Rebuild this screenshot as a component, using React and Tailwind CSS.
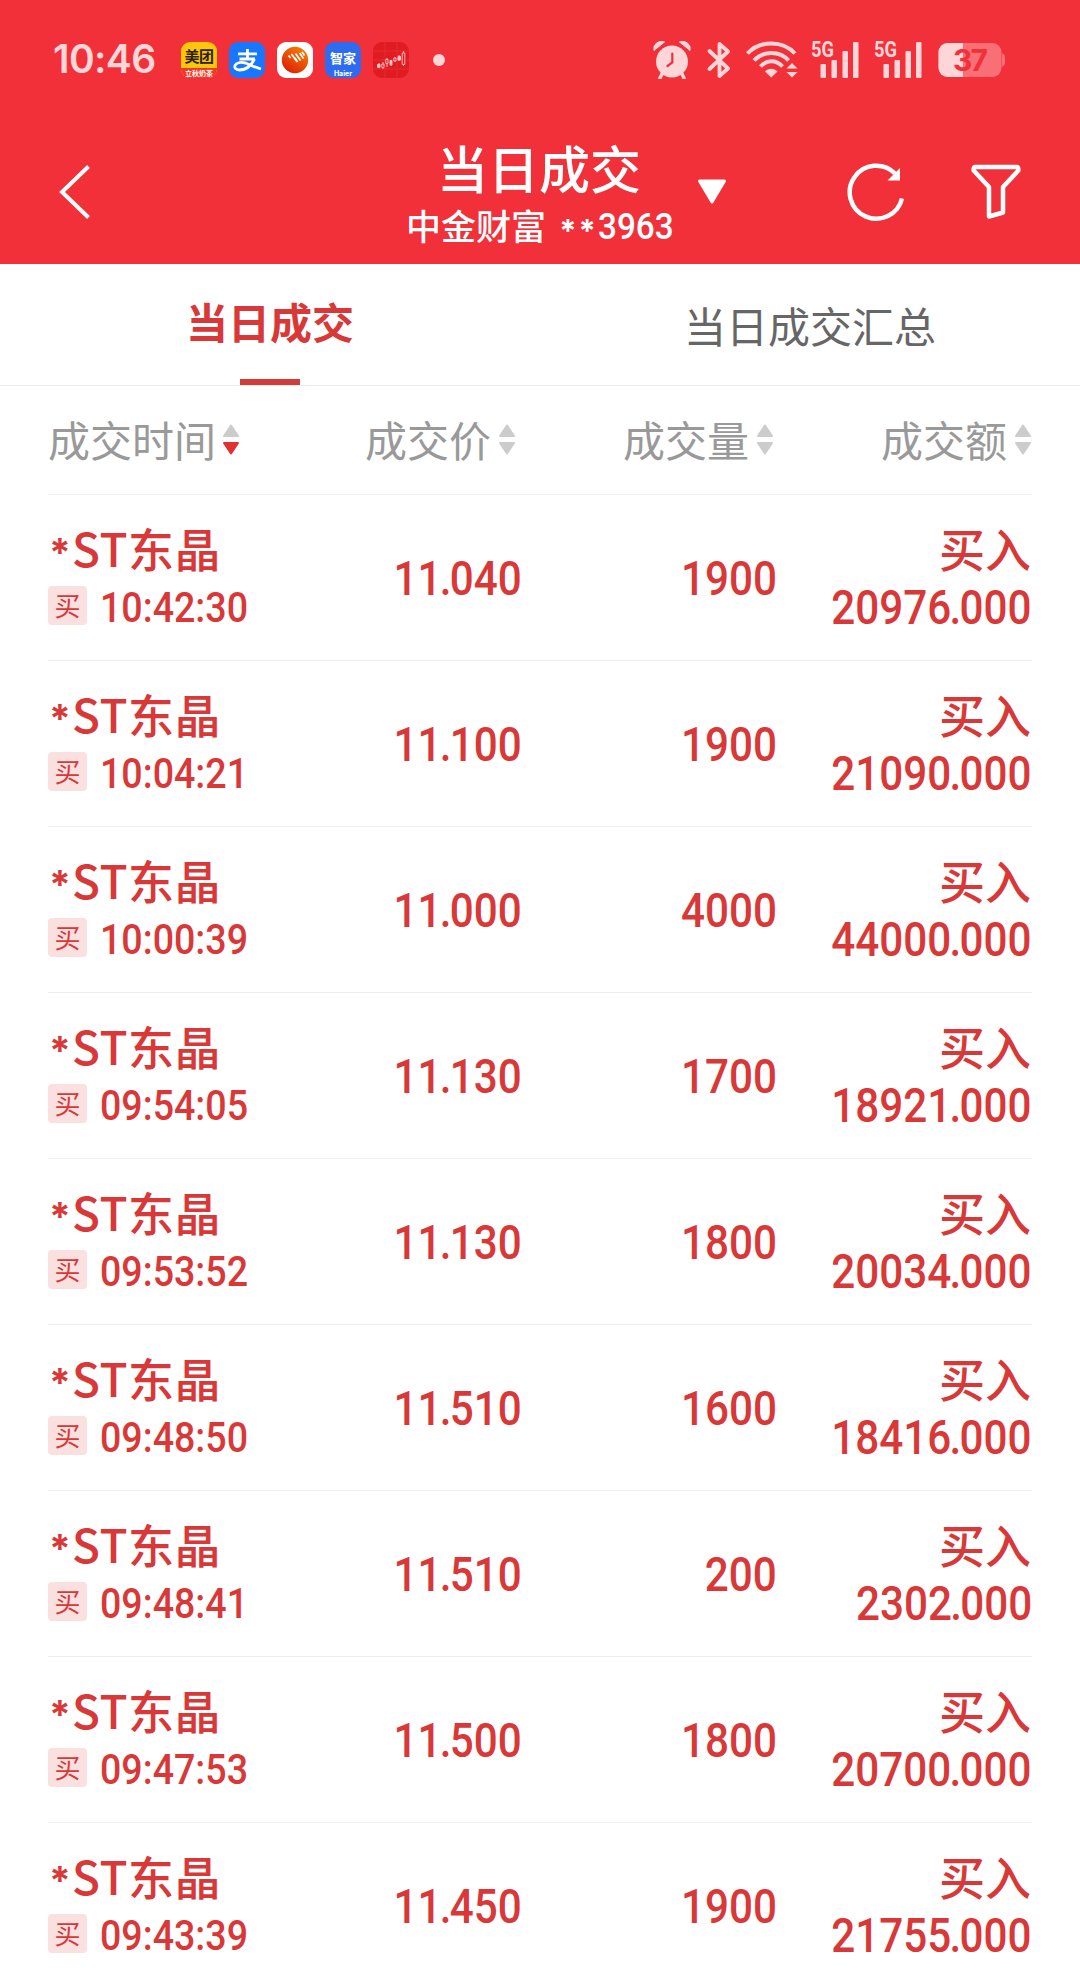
const trades = [
  { time: '10:42:30', price: '11.040', volume: '1900', amount: '20976.000' },
  { time: '10:04:21', price: '11.100', volume: '1900', amount: '21090.000' },
  { time: '10:00:39', price: '11.000', volume: '4000', amount: '44000.000' },
  { time: '09:54:05', price: '11.130', volume: '1700', amount: '18921.000' },
  { time: '09:53:52', price: '11.130', volume: '1800', amount: '20034.000' },
  { time: '09:48:50', price: '11.510', volume: '1600', amount: '18416.000' },
  { time: '09:48:41', price: '11.510', volume: '200', amount: '2302.000' },
  { time: '09:47:53', price: '11.500', volume: '1800', amount: '20700.000' },
  { time: '09:43:39', price: '11.450', volume: '1900', amount: '21755.000' },
];

const columns = [
  { label: '成交时间', sorted: true },
  { label: '成交价' },
  { label: '成交量' },
  { label: '成交额' },
];

function Signal() {
  return (
    <svg className="overflow-visible" width="48" height="38" viewBox="0 0 48 38" fill="currentColor">
      <text x="0" y="16" fontSize="22" fontWeight="700" textLength="23" lengthAdjust="spacingAndGlyphs" className="font-['Roboto',sans-serif]">5G</text>
      <rect x="9.500" y="23" width="5.500" height="14" rx="1" />
      <rect x="20.500" y="19" width="5.500" height="18" rx="1" />
      <rect x="31.500" y="10" width="5.500" height="27" rx="1" />
      <rect x="42" y="1" width="5.500" height="36" rx="1" />
    </svg>
  );
}

function AppIcons() {
  return (
    <div className="ml-[25px] flex gap-3">
      <div className="flex h-9 w-9 flex-col overflow-hidden rounded-[9px] bg-[#fdc60c] text-center">
        <div className="h-[26px] text-[15px] leading-[27px] font-bold tracking-[-0.5px] text-[#2b2200]">美团</div>
        <div className="h-[10px] bg-[#ee3a24] text-[7px] leading-[10px] font-bold whitespace-nowrap text-white">立秋奶茶</div>
      </div>
      <div className="flex h-9 w-9 items-center justify-center rounded-[9px] bg-[#1777ff]">
        <svg width="36" height="36" viewBox="0 0 36 36" fill="none" stroke="#fff">
          <path d="M9 11.800H28M18.500 7V17M10.500 17H26" strokeWidth="2.800" />
          <path d="M25.500 17C22.500 23 17 28 10.500 28C6.500 28 5 25.500 6.200 23.200C7.700 20.300 12.500 19.800 17 21.200C22 23 26 25.500 32 27" strokeWidth="2.800" />
        </svg>
      </div>
      <div className="flex h-9 w-9 items-center justify-center rounded-[9px] bg-white">
        <svg width="28" height="28" viewBox="0 0 28 28">
          <defs>
            <linearGradient id="ball" x1="1" y1="0" x2="0.300" y2="1">
              <stop offset="0" stopColor="#f88a00" />
              <stop offset="1" stopColor="#dd2208" />
            </linearGradient>
          </defs>
          <circle cx="14" cy="14" r="13.200" fill="url(#ball)" />
          <path d="M7.500 9.500L9.500 12M10.500 8L15.500 15M14.500 7.500L19.500 14.500M14 12L16.500 16M18.500 7L22.500 12.500M21 6L23.500 9.500" stroke="#fff" strokeWidth="1.700" />
        </svg>
      </div>
      <div className="flex h-9 w-9 flex-col overflow-hidden rounded-[9px] bg-[#2d6cf0] text-center text-white">
        <div className="h-[27px] text-[13px] leading-[32px] font-bold">智家</div>
        <div className="font-['Inter',sans-serif] text-[7px] leading-[10px] font-bold">Haier</div>
      </div>
      <svg width="36" height="36" viewBox="0 0 36 36">
        <rect width="36" height="36" rx="9" fill="#e01b22" />
        <path d="M0 9H36M0 18H36M0 27H36M12 0V36M24 0V36" stroke="#e93a3c" strokeWidth="0.600" />
        <g stroke="#ffc9c6" strokeWidth="0.900">
          <path d="M6 21V26M10 20V27M14 16V25M18 18V24M22 15V20M26 13V19M30.500 9V24" />
          <path d="M4.500 22.500H7V25.500H4.500ZM17 18.500H19V23H17ZM25 14.500H27.500V18H25Z" fill="#ffc9c6" />
          <path d="M8.800 22H11V25.500H8.800ZM12.800 17.500H15V21.500H12.800ZM20.800 16H23V19H20.800ZM29.200 11H31.800V22.500H29.200Z" fill="#e01b22" />
        </g>
      </svg>
    </div>
  );
}

function StatusBar() {
  return (
    <div className="flex h-[120px] items-center pl-[53px] text-[#ffd6d8]">
      <span className="w-[103px] pb-[3px] font-['Inter',sans-serif] text-[39px] leading-none font-semibold tracking-[-0.6px] whitespace-nowrap">10:46</span>
      <AppIcons />
      <span className="ml-6 h-3 w-3 rounded-full bg-[#ffd6d8]" />
      <svg className="ml-[208px]" width="38" height="38" viewBox="0 0 38 38">
        <path d="M1 9.500A7.500 7.500 0 0 1 11.500 1Z M37 9.500A7.500 7.500 0 0 0 26.500 1Z" fill="currentColor" stroke="currentColor" strokeLinejoin="round" />
        <path d="M9.500 32L7 37M28.500 32L31 37" stroke="currentColor" strokeWidth="3.500" strokeLinecap="round" />
        <circle cx="19" cy="20.500" r="16" fill="currentColor" />
        <path d="M19.300 12.500V21.500L14.500 25" fill="none" stroke="#f23039" strokeWidth="2.200" strokeLinecap="round" />
      </svg>
      <svg className="ml-4" width="24" height="38" viewBox="0 0 24 38" fill="none" stroke="currentColor" strokeWidth="3.800" strokeLinejoin="round" strokeLinecap="round">
        <path d="M2.500 10L21 27.500L12.500 35V3L21 10.500L2.500 28" />
      </svg>
      <svg className="ml-[15px]" width="52" height="38" viewBox="0 0 52 38" fill="none" stroke="currentColor" strokeWidth="4">
        <path d="M1.500 12.500C14 -1 37 -1 49 12.500M8 19.500C17 9.500 34 9.500 42.500 19.500M14.500 25.500C21 18.500 30 18.500 36.500 25.500" />
        <path d="M19 30.500C22.500 26.800 28 26.800 31.500 30.500L25.200 36.500Z" fill="currentColor" stroke="none" />
        <path d="M40.500 27.500L46 22L51.500 27.500ZM40.500 31L46 36.500L51.500 31Z" fill="currentColor" stroke="none" />
      </svg>
      <div className="ml-[13px] flex gap-[15px]">
        <Signal />
        <Signal />
      </div>
      <svg className="ml-4" width="68" height="36" viewBox="0 0 68 36">
        <defs>
          <clipPath id="level"><rect width="25" height="36" /></clipPath>
        </defs>
        <rect x="0.500" y="1" width="63" height="34" rx="9" fill="#f96f76" />
        <path d="M64 11.500C67 12 67 14 67 18C67 22 67 24 64 24.500Z" fill="#f96f76" />
        <rect x="0.500" y="1" width="63" height="34" rx="9" fill="#ffd6d8" clipPath="url(#level)" />
        <text x="15" y="29" fontSize="30" fontWeight="700" textLength="35" fill="#f23039" className="font-['Inter',sans-serif]">37</text>
      </svg>
    </div>
  );
}

function TitleBar() {
  return (
    <div className="flex h-36 text-white">
      <svg className="mt-11 ml-[58px]" width="34" height="56" viewBox="0 0 34 56" fill="none" stroke="currentColor" strokeWidth="4">
        <path d="M30.500 2.500L4 28L30.500 53.500" />
      </svg>
      <div className="ml-[277px] w-[340px] text-center font-medium">
        <div className="mt-[20px] h-[54px] text-[51px] leading-[54px]">当日成交</div>
        <div className="mt-[11px] flex h-10 items-center justify-center text-[35px] leading-10">
          中金财富
          <span className="relative top-[6px] ml-[13px] w-[39px] font-['Inter',sans-serif] text-[31px] font-bold tracking-[2px]">**</span>
          <span className="relative top-[2px] inline-block w-[74px] origin-left scale-x-90 text-left font-['Roboto',sans-serif] text-[37px]">3963</span>
        </div>
      </div>
      <svg className="mt-[59px] -ml-[12px]" width="30" height="26" viewBox="0 0 30 26">
        <path d="M2.500 2H27.500L15 23Z" fill="currentColor" stroke="currentColor" strokeWidth="3" strokeLinejoin="round" />
      </svg>
      <svg className="mt-[42px] ml-[119px]" width="60" height="60" viewBox="0 0 60 60">
        <path d="M56 36.500A26.500 26.500 0 1 1 49 11.500" fill="none" stroke="currentColor" strokeWidth="4.500" />
        <path d="M54 6V18.500H41.500Z" fill="currentColor" />
      </svg>
      <svg className="mt-[44px] ml-[65px]" width="50" height="56" viewBox="0 0 50 56" fill="none" stroke="currentColor" strokeWidth="4.500" strokeLinejoin="round">
        <path d="M4 3H46Q47.500 3 47.300 6.500L32 23V48.500L18 52.500V23L2.700 6.500Q2.500 3 4 3Z" />
      </svg>
    </div>
  );
}

function SortArrows({ sorted }) {
  return (
    <svg className={sorted ? 'ml-[6px]' : 'ml-[7px]'} width="18" height="34" viewBox="0 0 18 34" strokeLinejoin="round" strokeWidth="2">
      <path d="M2 13L9 2.500L16 13Z" fill="#ccc" stroke="#ccc" />
      <path d="M2 20L9 30.500L16 20Z" fill={sorted ? '#e03133' : '#ccc'} stroke={sorted ? '#e03133' : '#ccc'} />
    </svg>
  );
}

// condensed figures, with a tighter decimal point
function Figure({ value }) {
  const [whole, decimals] = value.split('.');
  return (
    <span className="inline-block origin-right scale-x-[0.88] font-['Roboto',sans-serif] text-[48px] leading-none font-medium">
      {whole}
      {decimals && <span className="-mx-[2px]">.</span>}
      {decimals}
    </span>
  );
}

function TradeRow({ trade }) {
  return (
    <div className="grid h-[166px] grid-cols-[210px_258px_258px_258px] border-t border-[#eee] text-[#d83838]">
      <div className="pt-[25px]">
        <div className="flex h-[54px] items-center text-[46px] leading-[54px] font-medium whitespace-nowrap">
          <span className="relative top-[6px] w-[24px] text-center font-['Inter',sans-serif] text-[39px] font-bold">*</span>
          <span className="tracking-[0.5px]">ST东晶</span>
        </div>
        <div className="mt-3 flex h-[39px] items-center">
          <span className="h-[39px] w-[39px] shrink-0 rounded-[4px] bg-[#fbe0e0] text-center text-[26px] leading-[37px]">买</span>
          <span className="mt-[5px] ml-[13px] inline-block origin-left scale-x-[0.895] font-['Roboto',sans-serif] text-[42px] leading-none font-medium">{trade.time}</span>
        </div>
      </div>
      <div className="-mr-[6px] pt-[60px] text-right">
        <Figure value={trade.price} />
      </div>
      <div className="-mr-[3px] pt-[60px] text-right">
        <Figure value={trade.volume} />
      </div>
      <div className="flex flex-col items-end pt-[25px]">
        <div className="mr-[1px] h-[54px] text-[46px] leading-[54px] font-medium">买入</div>
        <div className="mt-[10px]">
          <Figure value={trade.amount} />
        </div>
      </div>
    </div>
  );
}

export default function App() {
  return (
    <div className="h-[1984px] w-[1080px] overflow-hidden bg-white font-['Noto_Sans_CJK_SC',sans-serif]">
      <header className="h-[264px] bg-[#f23039]">
        <StatusBar />
        <TitleBar />
      </header>

      <div className="grid h-[122px] grid-cols-2 border-b border-[#ececec] text-center text-[42px]">
        <div className="flex flex-col items-center justify-between text-[#d83838]">
          <span className="pt-[27px] leading-[60px] font-bold">当日成交</span>
          <span className="h-1.5 w-[60px] bg-[#d23b3b]" />
        </div>
        <div className="pt-[31px] leading-[60px] text-[#666]">当日成交汇总</div>
      </div>

      <div className="px-12">
        <div className="grid h-[108px] grid-cols-[210px_258px_258px_258px] text-[42px] text-[#999]">
          {columns.map((col, i) => (
            <div key={col.label} className={`flex items-center whitespace-nowrap ${i === 0 ? '' : 'justify-end'}`}>
              <span className="pb-[3px]">{col.label}</span>
              <SortArrows sorted={col.sorted} />
            </div>
          ))}
        </div>
        {trades.map((trade) => (
          <TradeRow key={trade.time} trade={trade} />
        ))}
      </div>
    </div>
  );
}
